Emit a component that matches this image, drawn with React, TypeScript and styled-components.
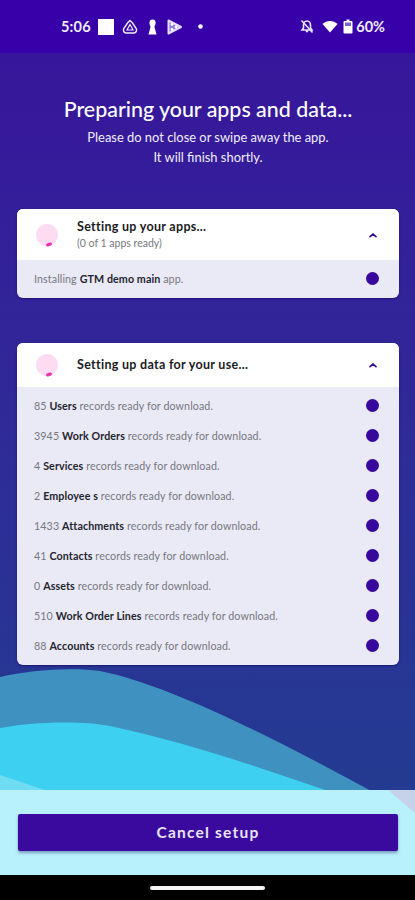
import * as React from "react";
import styled, { createGlobalStyle } from "styled-components";

const GlobalStyle = createGlobalStyle`
  html, body {
    margin: 0;
    padding: 0;
    background: #000;
    font-family: "Lato", "Liberation Sans", sans-serif;
  }
`;

const Page = styled.div`
  position: relative;
  width: 415px;
  height: 900px;
  display: flex;
  flex-direction: column;
  overflow: hidden;
  background: #000;
`;

const StatusBar = styled.div`
  height: 53px;
  flex: none;
  background: #3700a9;
  color: #f1eefc;
  display: flex;
  align-items: center;
  justify-content: space-between;
  padding: 0 30px 0 61px;
  box-sizing: border-box;
  font-size: 14.5px;
  font-weight: 700;
  position: relative;
  z-index: 1;
`;

const StatusGroup = styled.div`
  display: flex;
  align-items: center;
`;

const Time = styled.span`
  margin-right: 7px;
  letter-spacing: 0.2px;
`;

const Square = styled.div`
  width: 16px;
  height: 16px;
  background: #fff;
  margin-right: 8px;
`;

const Body = styled.main`
  flex: 1;
  position: relative;
  background: linear-gradient(180deg, #37169b 0%, #2f2a98 45%, #213f90 100%);
  display: flex;
  flex-direction: column;
`;

const Waves = styled.svg`
  position: absolute;
  left: 0;
  bottom: 0;
  width: 415px;
  height: 225px;
`;

const Content = styled.div`
  position: relative;
  flex: 1;
  padding: 0 16px 0 17px;
`;

const Title = styled.h1`
  margin: 42px 0 0;
  font-size: 21.4px;
  line-height: 28px;
  font-weight: 500;
  color: #fff;
  text-align: center;
`;

const Subtitle = styled.p`
  margin: 4px 0 42px;
  font-size: 12.9px;
  line-height: 20px;
  color: #f0eefa;
  text-align: center;
`;

const Card = styled.section`
  border-radius: 6px;
  overflow: hidden;
  background: #e9eaf5;
  margin-bottom: 45px;
  box-shadow: 0 1px 2px rgba(20, 0, 90, 0.6);
`;

const CardHeader = styled.header<{ $height: number }>`
  height: ${(p) => p.$height}px;
  background: #fff;
  display: flex;
  align-items: center;
  padding: 0 19px 0 19px;
`;

const Spinner = styled.div`
  position: relative;
  width: 22px;
  height: 22px;
  border-radius: 50%;
  background: #fddcf1;
  flex: none;
  margin-right: 19px;

  &::after {
    content: "";
    position: absolute;
    left: 10px;
    bottom: 0;
    width: 6px;
    height: 3px;
    border-radius: 2px;
    background: #ee2fb0;
    transform: rotate(-20deg);
  }
`;

const HeaderText = styled.div`
  flex: 1;
`;

const CardTitle = styled.div`
  font-size: 12.5px;
  line-height: 16px;
  font-weight: 700;
  letter-spacing: 0.3px;
  color: #1b1b24;
`;

const CardSub = styled.div`
  margin-top: 1px;
  font-size: 10.5px;
  line-height: 14px;
  color: #777780;
`;

const Chevron = styled.svg`
  width: 12px;
  height: 8px;
  margin-right: 1px;
  flex: none;
`;

const List = styled.div`
  padding: 3px 0 5px;
`;

const Row = styled.div`
  height: 30px;
  display: flex;
  align-items: center;
  justify-content: space-between;
  padding: 0 20px 0 17px;
  font-size: 10.7px;
  color: #77777f;
  letter-spacing: 0.1px;

  b {
    font-weight: 700;
    color: #24242e;
  }
`;

const Dot = styled.div`
  width: 13px;
  height: 13px;
  border-radius: 50%;
  background: #38089c;
  flex: none;
`;

const Footer = styled.footer`
  position: relative;
  height: 85px;
  flex: none;
  padding: 24px 17px 0 18px;
  box-sizing: border-box;
`;

const CancelButton = styled.button`
  display: block;
  width: 100%;
  height: 37px;
  padding: 0 0 2px;
  border: 0;
  border-radius: 2px;
  background: #3a0a9e;
  color: #e8e4f8;
  font-family: inherit;
  font-size: 15.5px;
  font-weight: 700;
  letter-spacing: 1.2px;
  box-shadow: 0 2px 3px rgba(20, 40, 110, 0.4);
`;

const NavBar = styled.div`
  height: 25px;
  flex: none;
  background: #000;
  display: flex;
  align-items: center;
  justify-content: center;
`;

const HomePill = styled.div`
  width: 115px;
  height: 4px;
  border-radius: 2px;
  background: #f4f4f4;
`;

const StatusIcon = styled.svg<{ $gap: number }>`
  display: block;
  margin-right: ${(p) => p.$gap}px;
  flex: none;
`;

const apps: [string, string][] = [
  ["85", "Users"],
  ["3945", "Work Orders"],
  ["4", "Services"],
  ["2", "Employee s"],
  ["1433", "Attachments"],
  ["41", "Contacts"],
  ["0", "Assets"],
  ["510", "Work Order Lines"],
  ["88", "Accounts"],
];

const UpChevron = () => (
  <Chevron viewBox="0 0 12 8">
    <path d="M3 5.6 L6 3 L9 5.6" fill="none" stroke="#38089c" strokeWidth="1.7" strokeLinecap="round" />
  </Chevron>
);

export default function App() {
  return (
    <Page>
      <GlobalStyle />
      <StatusBar>
        <StatusGroup>
          <Time>5:06</Time>
          <Square />
          <StatusIcon $gap={10} width="16" height="16" viewBox="0 0 16 16">
            <path d="M8 1.5 L10.5 4 L14.5 10 Q15 13.5 12 14 L4 14 Q1 13.5 1.5 10 L5.5 4 Z" fill="none" stroke="#f1eefc" strokeWidth="1.4" />
            <path d="M8 5.5 L11 11 L5 11 Z" fill="none" stroke="#f1eefc" strokeWidth="1.2" />
          </StatusIcon>
          <StatusIcon $gap={10} width="9" height="16" viewBox="0 0 9 16">
            <path d="M4.5 0.5 C7 0.5 8 2.5 7.5 5 C7.2 6.5 6.5 7 6.5 8 L8.5 15.5 L0.5 15.5 L2.5 8 C2.5 7 1.8 6.5 1.5 5 C1 2.5 2 0.5 4.5 0.5 Z" fill="#fff" />
          </StatusIcon>
          <StatusIcon $gap={16} width="15" height="16" viewBox="0 0 15 16">
            <path d="M1.5 1.5 L14 8 L1.5 14.5 Z" fill="#8f78d8" stroke="#e4def6" strokeWidth="2" strokeLinejoin="round" />
            <circle cx="5" cy="5.5" r="1.4" fill="#fff" />
            <circle cx="5" cy="10.5" r="1.4" fill="#fff" />
            <circle cx="9" cy="8" r="1.4" fill="#fff" />
          </StatusIcon>
          <StatusIcon $gap={0} width="5" height="5" viewBox="0 0 5 5">
            <circle cx="2.5" cy="2.5" r="2.3" fill="#fff" />
          </StatusIcon>
        </StatusGroup>
        <StatusGroup>
          <StatusIcon $gap={8} width="14" height="15" viewBox="0 0 14 15">
            <path d="M7 2 C4.5 2 3.5 4 3.5 6 L3.5 9 L2 11 L12 11 L10.5 9 L10.5 6 C10.5 4 9.5 2 7 2 Z M5.8 12.5 L8.2 12.5" fill="none" stroke="#e8e4f8" strokeWidth="1.6" />
            <path d="M1.5 1.5 L12.5 13.5" stroke="#e8e4f8" strokeWidth="1.6" />
          </StatusIcon>
          <StatusIcon $gap={5} width="16" height="13" viewBox="0 0 16 13">
            <path d="M0.5 4 C4.5 0 11.5 0 15.5 4 L8 12.5 Z" fill="#fff" />
          </StatusIcon>
          <StatusIcon $gap={3} width="10" height="15" viewBox="0 0 10 15">
            <path d="M3.5 0.5 L6.5 0.5 L6.5 2 L8.5 2 Q9.5 2 9.5 3 L9.5 13.5 Q9.5 14.5 8.5 14.5 L1.5 14.5 Q0.5 14.5 0.5 13.5 L0.5 3 Q0.5 2 1.5 2 L3.5 2 Z" fill="#fff" />
            <rect x="2" y="3.5" width="6" height="3.5" fill="#7d62cf" />
          </StatusIcon>
          <span>60%</span>
        </StatusGroup>
      </StatusBar>

      <Body>
        <Waves viewBox="0 0 415 225" aria-hidden="true">
          <path d="M0 27 C30 20 70 17 100 21 C170 35 280 90 415 165 L415 225 L0 225 Z" fill="#3f92c0" />
          <path d="M0 78 C30 72 80 70 110 76 C190 93 260 118 340 145 L415 170 L415 225 L0 225 Z" fill="#3dd0f0" />
          <path d="M0 125 L45 140 L0 140 Z" fill="#6fdcf3" />
          <rect x="0" y="140" width="415" height="85" fill="#b8f0fb" />
          <path d="M388 140 L415 140 L415 163 Z" fill="#c6d2ea" />
        </Waves>
        <Content>
          <Title>Preparing your apps and data...</Title>
          <Subtitle>
            Please do not close or swipe away the app.
            <br />
            It will finish shortly.
          </Subtitle>
          <Card>
            <CardHeader $height={51}>
              <Spinner />
              <HeaderText>
                <CardTitle>Setting up your apps...</CardTitle>
                <CardSub>(0 of 1 apps ready)</CardSub>
              </HeaderText>
              <UpChevron />
            </CardHeader>
            <List>
              <Row>
                <span>
                  Installing <b>GTM demo main</b> app.
                </span>
                <Dot />
              </Row>
            </List>
          </Card>
          <Card>
            <CardHeader $height={44}>
              <Spinner />
              <HeaderText>
                <CardTitle>Setting up data for your use...</CardTitle>
              </HeaderText>
              <UpChevron />
            </CardHeader>
            <List>
              {apps.map(([count, name]) => (
                <Row key={name}>
                  <span>
                    {count} <b>{name}</b> records ready for download.
                  </span>
                  <Dot />
                </Row>
              ))}
            </List>
          </Card>
        </Content>
        <Footer>
          <CancelButton>Cancel setup</CancelButton>
        </Footer>
      </Body>
      <NavBar>
        <HomePill />
      </NavBar>
    </Page>
  );
}
